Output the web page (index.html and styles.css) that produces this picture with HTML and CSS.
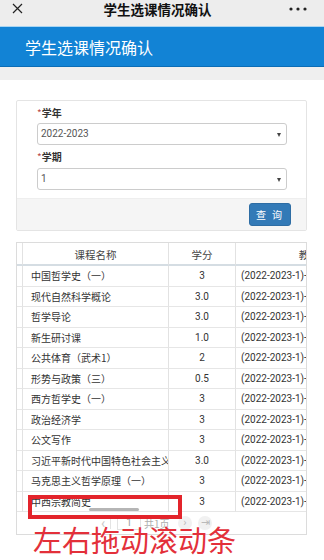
FILE: index.html
```html
<!DOCTYPE html>
<html lang="zh">
<head>
    <meta charset="UTF-8">
    <meta name="viewport" content="width=device-width, initial-scale=1.0">
    <title>学生选课情况确认</title>
    <link rel="stylesheet" href="styles.css">
</head>
<body>
    <div class="topbar">
        <svg class="close" width="11" height="11" viewBox="0 0 11 11">
            <path d="M1 1 L10 10 M10 1 L1 10" stroke="#222" stroke-width="1.2" fill="none"/>
        </svg>
        <div class="title">学生选课情况确认</div>
        <svg class="more" width="20" height="6" viewBox="0 0 20 6">
            <circle cx="3" cy="3" r="1.6" fill="#222"/>
            <circle cx="10" cy="3" r="1.6" fill="#222"/>
            <circle cx="17" cy="3" r="1.6" fill="#222"/>
        </svg>
    </div>
    <div class="banner">学生选课情况确认</div>
    <div class="strip"></div>

    <main>
        <div class="card">
            <div class="card-body">
                <label class="field-label"><span class="req">*</span>学年</label>
                <div class="select">2022-2023<span class="arrow"></span></div>
                <label class="field-label second"><span class="req">*</span>学期</label>
                <div class="select">1<span class="arrow"></span></div>
            </div>
            <div class="card-footer">
                <button class="btn-query">查 询</button>
            </div>
        </div>

        <div class="grid">
            <table>
                <colgroup>
                    <col style="width:6px">
                    <col style="width:146px">
                    <col style="width:67px">
                    <col style="width:158px">
                    <col style="width:120px">
                </colgroup>
                <thead>
                    <tr><th></th><th>课程名称</th><th>学分</th><th>教学班</th><th>上课时间</th></tr>
                </thead>
                <tbody>
                    <tr><td></td><td class="name">中国哲学史（一）</td><td class="num">3</td><td class="cls">(2022-2023-1)-01001</td><td></td></tr>
                    <tr><td></td><td class="name">现代自然科学概论</td><td class="num">3.0</td><td class="cls">(2022-2023-1)-01002</td><td></td></tr>
                    <tr><td></td><td class="name">哲学导论</td><td class="num">3.0</td><td class="cls">(2022-2023-1)-01003</td><td></td></tr>
                    <tr><td></td><td class="name">新生研讨课</td><td class="num">1.0</td><td class="cls">(2022-2023-1)-01004</td><td></td></tr>
                    <tr><td></td><td class="name">公共体育（武术1）</td><td class="num">2</td><td class="cls">(2022-2023-1)-01005</td><td></td></tr>
                    <tr><td></td><td class="name">形势与政策（三）</td><td class="num">0.5</td><td class="cls">(2022-2023-1)-01006</td><td></td></tr>
                    <tr><td></td><td class="name">西方哲学史（一）</td><td class="num">3</td><td class="cls">(2022-2023-1)-01007</td><td></td></tr>
                    <tr><td></td><td class="name">政治经济学</td><td class="num">3</td><td class="cls">(2022-2023-1)-01008</td><td></td></tr>
                    <tr><td></td><td class="name">公文写作</td><td class="num">3</td><td class="cls">(2022-2023-1)-01009</td><td></td></tr>
                    <tr><td></td><td class="name">习近平新时代中国特色社会主义思想概论</td><td class="num">3.0</td><td class="cls">(2022-2023-1)-01010</td><td></td></tr>
                    <tr><td></td><td class="name">马克思主义哲学原理（一）</td><td class="num">3</td><td class="cls">(2022-2023-1)-01011</td><td></td></tr>
                    <tr><td></td><td class="name">中西宗教简史</td><td class="num">3</td><td class="cls">(2022-2023-1)-01012</td><td></td></tr>
                </tbody>
            </table>
            <div class="pager">
                <span class="pg-prev">‹</span>
                <span class="pg-sep"></span>
                <span class="pg-input">1</span>
                <span class="pg-total">共1页</span>
                <span class="pg-btn">›</span>
                <span class="pg-btn">⇥</span>
            </div>
            <div class="scroll-thumb"></div>
        </div>
    </main>

    <div class="note-box"></div>
    <div class="note-text">左右拖动滚动条</div>
</body>
</html>
```

FILE: styles.css
```css
* {
    margin: 0;
    padding: 0;
    box-sizing: border-box;
}
body {
    width: 324px;
    height: 560px;
    overflow: hidden;
    background: #fff;
    font-family: Roboto, "Noto Sans CJK SC", sans-serif;
    position: relative;
}

/* wechat top bar */
.topbar {
    height: 27px;
    background: #ededed;
    border-bottom: 1px solid #a9d5f2;
    display: flex;
    align-items: flex-start;
    padding: 2px 16px 0 12px;
}
.close {
    margin-top: 1px;
}
.title {
    flex: 1;
    text-align: center;
    font-family: "Noto Sans CJK SC", sans-serif;
    font-size: 13.5px;
    font-weight: bold;
    line-height: 15px;
    color: #111;
    padding-left: 4px;
}
.more {
    margin-top: 4px;
}

.banner {
    height: 40px;
    background: #1283d5;
    border-bottom: 1px solid #0b6db6;
    color: #fff;
    font-family: "Noto Sans CJK SC", sans-serif;
    font-size: 16px;
    line-height: 40px;
    padding-left: 25px;
}
.strip {
    height: 13px;
    background: #efefef;
}

main {
    padding: 20px 17px 0 16px;
}

/* query card */
.card {
    border: 1px solid #e4e4e4;
    border-radius: 2px;
}
.card-body {
    padding: 5px 19px 8px 20px;
}
.field-label {
    display: block;
    font-family: "Noto Sans CJK SC", sans-serif;
    font-size: 10px;
    font-weight: bold;
    line-height: 14px;
    color: #333;
}
.field-label.second {
    margin-top: 5px;
}
.req {
    color: #b94a48;
    font-weight: normal;
}
.select {
    margin-top: 3px;
    height: 22px;
    border: 1px solid #ccc;
    border-radius: 3px;
    font-size: 10px;
    line-height: 20px;
    color: #555;
    padding-left: 3px;
    position: relative;
}
.field-label.second + .select {
    margin-top: 4px;
}
.arrow {
    position: absolute;
    right: 5px;
    top: 9px;
    border-left: 2.5px solid transparent;
    border-right: 2.5px solid transparent;
    border-top: 4px solid #444;
}
.card-footer {
    background: #f5f5f5;
    border-top: 1px solid #eee;
    height: 32px;
    display: flex;
    justify-content: flex-end;
    padding: 4px 15px 0 0;
}
.btn-query {
    width: 42px;
    height: 23px;
    background: #337ab7;
    border: 1px solid #2e6da4;
    border-radius: 3px;
    color: #fff;
    font-family: "Noto Sans CJK SC", sans-serif;
    font-size: 10px;
    letter-spacing: 2px;
}

/* course grid */
.grid {
    margin-top: 11px;
    border: 1px solid #dcdcdc;
    overflow: hidden;
    position: relative;
}
table {
    width: 497px;
    table-layout: fixed;
    border-collapse: separate;
    border-spacing: 0;
    font-size: 10px;
    color: #333;
}
th {
    font-family: "Noto Sans CJK SC", sans-serif;
    font-weight: normal;
    font-size: 10.5px;
    color: #444;
    line-height: 18px;
    padding-top: 3px;
    border-bottom: 2px solid #d5dde3;
    border-right: 1px solid #e2e2e2;
    white-space: nowrap;
    overflow: hidden;
}
td {
    line-height: 19.5px;
    border-bottom: 1px solid #e6e6e6;
    border-right: 1px solid #e2e2e2;
    white-space: nowrap;
    overflow: hidden;
}
td.name {
    padding-left: 8px;
    font-family: "Noto Sans CJK SC", sans-serif;
}
td.num {
    text-align: center;
}
td.cls {
    padding-left: 5px;
}

.pager {
    height: 22px;
    display: flex;
    align-items: center;
    padding-left: 84px;
    color: #bbb;
    font-size: 10px;
    opacity: 0.8;
}
.pg-prev {
    font-size: 14px;
    width: 8px;
}
.pg-sep {
    width: 1px;
    height: 12px;
    background: #ddd;
    margin: 0 6px 0 1px;
}
.pg-input {
    width: 24px;
    height: 14px;
    border: 1px solid #ddd;
    text-align: center;
    line-height: 12px;
    color: #888;
}
.pg-total {
    margin-left: 3px;
    width: 28px;
    color: #999;
    font-family: "Noto Sans CJK SC", sans-serif;
}
.pg-btn {
    width: 14px;
    height: 14px;
    border-radius: 50%;
    background: #eee;
    color: #aaa;
    text-align: center;
    line-height: 13px;
    font-size: 11px;
    margin-left: 6px;
}
.scroll-thumb {
    position: absolute;
    left: 72px;
    top: 265px;
    width: 50px;
    height: 3px;
    border-radius: 2px;
    background: #b5b5b5;
}

/* red annotation */
.note-box {
    position: absolute;
    left: 28px;
    top: 495px;
    width: 154px;
    height: 24px;
    border: 4px solid #e3242b;
}
.note-text {
    position: absolute;
    left: 33px;
    top: 523px;
    font-family: "Noto Sans CJK SC", sans-serif;
    font-size: 29px;
    line-height: 32px;
    color: #e3303a;
}
```
